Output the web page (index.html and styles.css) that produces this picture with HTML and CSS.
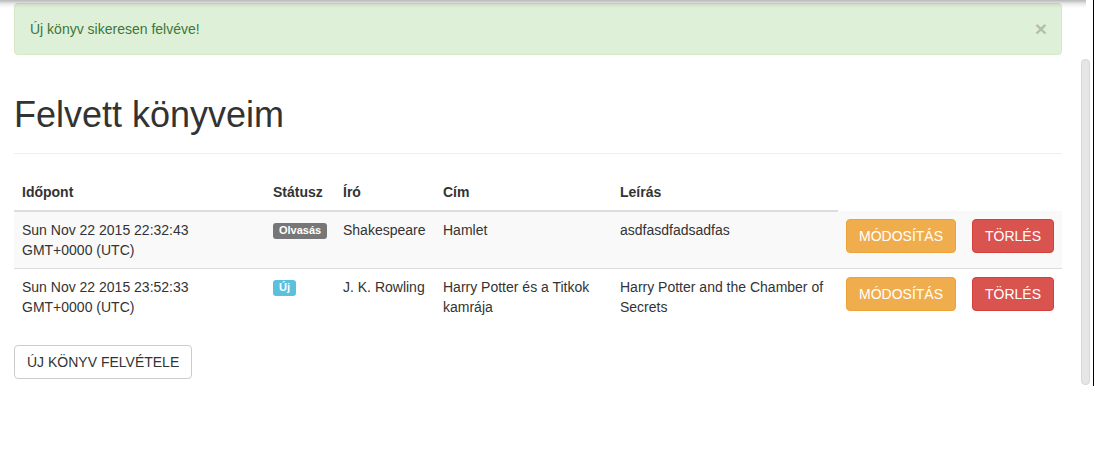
FILE: index.html
```html
<!DOCTYPE html>
<html lang="hu">
<head>
<meta charset="utf-8">
<title>Felvett könyveim</title>
<link rel="stylesheet" href="styles.css">
</head>
<body>
<div class="top-shadow"></div>
<div class="page">
  <main class="main">
    <div class="container">
      <div class="alert alert-success">
        <span>Új könyv sikeresen felvéve!</span>
        <button class="close" type="button">×</button>
      </div>
      <div class="page-header">
        <h1>Felvett könyveim</h1>
      </div>
      <table class="table">
        <colgroup>
          <col class="c1"><col class="c2"><col class="c3"><col class="c4"><col class="c5"><col class="c6"><col class="c7">
        </colgroup>
        <thead>
          <tr>
            <th>Időpont</th>
            <th class="th-status">Státusz</th>
            <th>Író</th>
            <th>Cím</th>
            <th>Leírás</th>
          </tr>
        </thead>
        <tbody>
          <tr class="odd">
            <td>Sun Nov 22 2015 22:32:43<br>GMT+0000 (UTC)</td>
            <td class="td-status"><span class="label label-default">Olvasás</span></td>
            <td>Shakespeare</td>
            <td>Hamlet</td>
            <td>asdfasdfadsadfas</td>
            <td><button class="btn btn-warning">MÓDOSÍTÁS</button></td>
            <td><button class="btn btn-danger">TÖRLÉS</button></td>
          </tr>
          <tr>
            <td>Sun Nov 22 2015 23:52:33<br>GMT+0000 (UTC)</td>
            <td class="td-status"><span class="label label-info">Új</span></td>
            <td>J. K. Rowling</td>
            <td>Harry Potter és a Titkok kamrája</td>
            <td>Harry Potter and the Chamber of Secrets</td>
            <td><button class="btn btn-warning">MÓDOSÍTÁS</button></td>
            <td><button class="btn btn-danger">TÖRLÉS</button></td>
          </tr>
        </tbody>
      </table>
      <button class="btn btn-default">ÚJ KÖNYV FELVÉTELE</button>
    </div>
  </main>
  <aside class="scroll">
    <div class="scroll-track">
      <div class="scroll-thumb"></div>
    </div>
  </aside>
</div>
</body>
</html>
```

FILE: styles.css
```css
* { box-sizing: border-box; }

html, body {
  margin: 0;
  padding: 0;
  background: #fff;
}

body {
  font-family: "Liberation Sans", Arial, Helvetica, sans-serif;
  font-size: 14px;
  line-height: 20px;
  color: #333;
  position: relative;
  height: 460px;
  overflow: hidden;
}

.top-shadow {
  position: absolute;
  left: 0;
  top: 0;
  width: 1086px;
  height: 8px;
  background: linear-gradient(to bottom, rgba(0,0,0,0.28), rgba(0,0,0,0.08) 50%, rgba(0,0,0,0));
  pointer-events: none;
  z-index: 5;
}

.page {
  display: flex;
  height: 460px;
}

.main {
  flex: 1;
}

.container {
  width: 1048px;
  margin-left: 14px;
  padding-top: 3px;
}

.alert {
  display: flex;
  align-items: center;
  justify-content: space-between;
  padding: 15px;
  border: 1px solid #d6e9c6;
  border-radius: 4px;
  background: #dff0d8;
  color: #3c763d;
  margin-bottom: 20px;
  height: 52px;
}

.close {
  background: none;
  border: 0;
  padding: 0;
  margin-right: -1px;
  font-family: "Liberation Sans", Arial, sans-serif;
  font-size: 21px;
  font-weight: bold;
  line-height: 1;
  color: #000;
  opacity: 0.2;
  margin-top: -2px;
}

.page-header {
  margin: 40px 0 20px;
  padding-bottom: 9px;
  border-bottom: 1px solid #eee;
}

h1 {
  margin: 0 0 10px;
  font-size: 36px;
  font-weight: 500;
  line-height: 39px;
}

.table {
  width: 1048px;
  border-collapse: collapse;
  border-spacing: 0;
  margin-bottom: 20px;
  table-layout: fixed;
}

.c1 { width: 250px; }
.c2 { width: 71px; }
.c3 { width: 100px; }
.c4 { width: 177px; }
.c5 { width: 226px; }
.c6 { width: 126px; }
.c7 { width: 98px; }

.table th {
  text-align: left;
  font-weight: bold;
  padding: 8px;
  vertical-align: bottom;
  border-bottom: 2px solid #ddd;
}

.table th.th-status,
.table td.td-status {
  padding-left: 9px;
  padding-right: 7px;
}

.table td {
  padding: 8px;
  vertical-align: top;
  border-top: 1px solid #ddd;
}

.table thead + tbody tr:first-child td {
  border-top: 0;
}

.table tr.odd td {
  background: #f9f9f9;
}

.label {
  display: inline-block;
  padding: 2px 6px 3px;
  font-size: 11px;
  font-weight: bold;
  line-height: 1;
  color: #fff;
  border-radius: 3px;
  vertical-align: 1px;
}

.label-default { background: #777; }
.label-info { background: #5bc0de; }

.btn {
  display: inline-block;
  padding: 6px 12px;
  font-family: "Liberation Sans", Arial, sans-serif;
  font-size: 14px;
  line-height: 20px;
  border: 1px solid transparent;
  border-radius: 4px;
  background: #fff;
  color: #333;
  cursor: pointer;
}

.btn-warning {
  background: #f0ad4e;
  border-color: #eea236;
  color: #fff;
}

.btn-danger {
  background: #d9534f;
  border-color: #d43f3a;
  color: #fff;
}

.btn-default {
  background: #fff;
  border-color: #ccc;
  color: #333;
}

.scroll {
  width: 16px;
  display: flex;
  justify-content: flex-end;
}

.scroll-track {
  width: 16px;
  height: 386px;
  border-right: 1px solid #000;
  padding-top: 59px;
  padding-left: 3px;
}

.scroll-thumb {
  width: 9px;
  height: 326px;
  background: #e6e6e6;
  border: 1px solid #d9d9d9;
  border-radius: 4px;
}
```
